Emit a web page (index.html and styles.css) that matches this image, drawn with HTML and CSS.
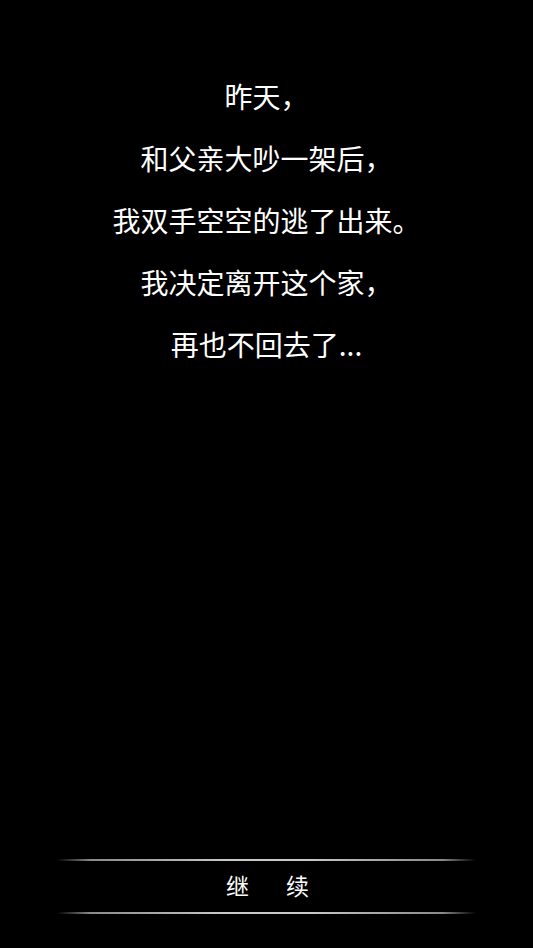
FILE: index.html
```html
<!DOCTYPE html>
<html lang="zh">
<head>
<meta charset="utf-8">
<link rel="stylesheet" href="styles.css">
</head>
<body>
<div class="screen">
  <div class="story">
    <p class="line">昨天，</p>
    <p class="line">和父亲大吵一架后，</p>
    <p class="line">我双手空空的逃了出来。</p>
    <p class="line">我决定离开这个家，</p>
    <p class="line">再也不回去了...</p>
  </div>
  <div class="continue">
    <div class="rule"></div>
    <div class="label"><span>继</span><span>续</span></div>
    <div class="rule"></div>
  </div>
</div>
</body>
</html>
```
FILE: styles.css
```css
html, body {
  margin: 0;
  padding: 0;
  background: #000;
}
.screen {
  width: 533px;
  height: 948px;
  display: flex;
  flex-direction: column;
  font-family: "Noto Sans CJK SC", "Noto Sans", sans-serif;
  color: #fff;
}
.story {
  padding-top: 65px;
  flex: 1;
}
.line {
  margin: 0;
  text-align: center;
  font-size: 28px;
  line-height: 62px;
}
.continue {
  padding: 0 57px 34px 57px;
  display: flex;
  flex-direction: column;
}
.rule {
  height: 2px;
  background: linear-gradient(to right, rgba(160,160,160,0) 0%, #8a8a8a 8%, #c8c8c8 40%, #c8c8c8 60%, #8a8a8a 92%, rgba(160,160,160,0) 100%);
}
.label {
  height: 51px;
  display: flex;
  justify-content: center;
  align-items: center;
  gap: 37px;
  font-size: 23px;
  padding-left: 2px;
  padding-bottom: 3px;
  box-sizing: border-box;
}
```
